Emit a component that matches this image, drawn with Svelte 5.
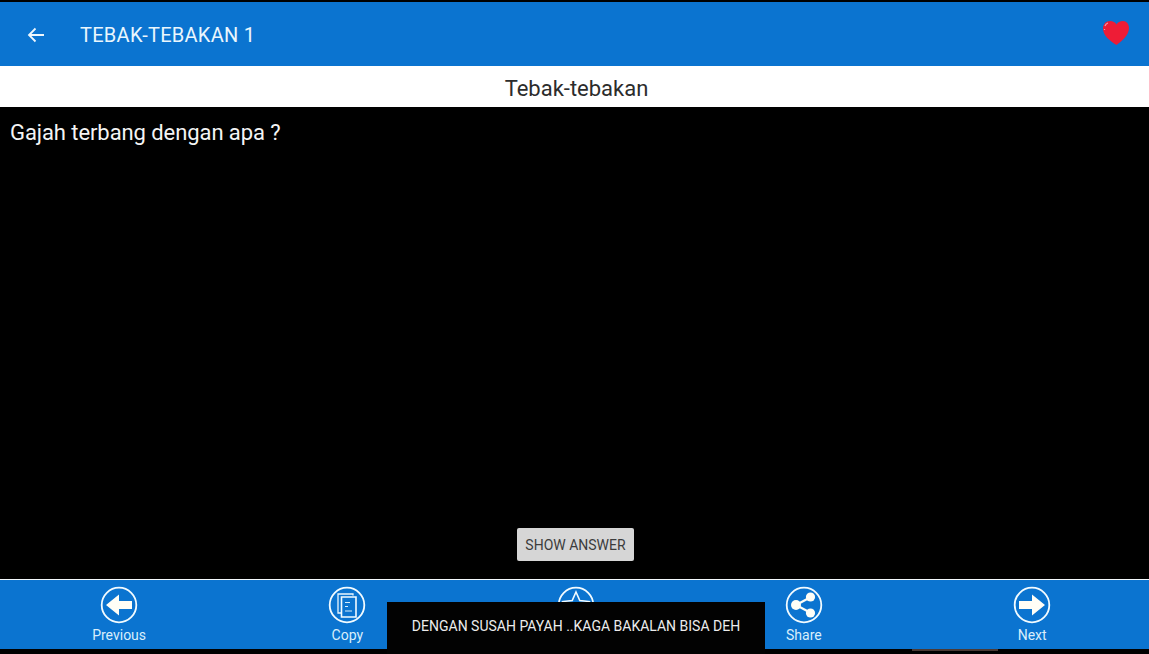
<script>
	const actions = [
		{ label: 'Previous', icon: 'prev' },
		{ label: 'Copy', icon: 'copy' },
		{ label: '', icon: 'star' },
		{ label: 'Share', icon: 'share' },
		{ label: 'Next', icon: 'next' }
	];
</script>

<div class="screen">
	<header class="appbar">
		<svg class="back" viewBox="0 0 18 16" width="18" height="16" aria-hidden="true">
			<path d="M17 8H2M8.5 1.5 2 8l6.500 6.500" fill="none" stroke="#eef7fd" stroke-width="1.800" />
		</svg>
		<h1>TEBAK-TEBAKAN 1</h1>
		<svg class="heart" viewBox="0 0 30 28" width="30" height="28" aria-hidden="true">
			<path d="M15.500 26C9 22 2 16.500 2 9.500 2 5 5 2 9 2c3 0 5.500 1.500 6.500 3.500C16.500 3.500 19 2 22 2c3.500 0 6 3 6 7 0 7-6.500 12.500-12.500 17Z" fill="#ee1c36" />
			<path d="M4 7c.5-1.500 1.500-2.500 3-3M3.500 10v1" fill="none" stroke="#f39aa8" stroke-width="1.200" />
		</svg>
	</header>

	<div class="subtitle">Tebak-tebakan</div>

	<main class="content">
		<p class="question">Gajah terbang dengan apa ?</p>
		<button class="show">SHOW ANSWER</button>
	</main>

	<nav class="bottom">
		{#each actions as a}
			<div class="action">
				<svg viewBox="0 0 38 38" width="38" height="38" aria-hidden="true">
					<circle cx="19" cy="19" r="17.300" fill="none" stroke="#f2fbff" stroke-width="1.800" />
					{#if a.icon === 'prev'}
						<path d="M6 19 19 8.500V15H32v8H19v6.500Z" fill="#fffef6" />
					{:else if a.icon === 'next'}
						<path d="M32 19 19 8.500V15H6v8h13v6.500Z" fill="#fffef6" />
					{:else if a.icon === 'copy'}
						<path d="M25 9.500V8H10v19h3" fill="none" stroke="#eaf6fd" stroke-width="1.300" />
						<path d="M13.500 11h14.500v20H13.500Z" fill="#0b74d0" stroke="#f2fbff" stroke-width="1.600" />
						<path d="M17 16.500h5M17 20.500h3M17 25h7" fill="none" stroke="#d8eefb" stroke-width="1" />
					{:else if a.icon === 'star'}
						<path d="M19 6l3.800 8.500 9.200 1-6.900 6.200 2 9L19 26l-8.100 4.700 2-9L6 15.500l9.200-1Z" fill="none" stroke="#f2fbff" stroke-width="1.600" />
					{:else}
						<path d="M25 11.500 11 19l14 7.500" fill="none" stroke="#fffef6" stroke-width="2.200" />
						<circle cx="25.500" cy="11" r="4.600" fill="#fffef6" />
						<circle cx="11" cy="19" r="5" fill="#fffef6" />
						<circle cx="25.500" cy="27" r="4.600" fill="#fffef6" />
					{/if}
				</svg>
				{#if a.label}
					<span>{a.label}</span>
				{/if}
			</div>
		{/each}
	</nav>

	<div class="edge"><i></i></div>

	<div class="toast">DENGAN SUSAH PAYAH ..KAGA BAKALAN BISA DEH</div>
</div>

<style>
	:global(body) {
		margin: 0;
		background: #000;
	}
	.screen {
		position: relative;
		width: 1149px;
		height: 654px;
		display: flex;
		flex-direction: column;
		overflow: hidden;
		background: #000;
		font-family: Roboto, "Liberation Sans", sans-serif;
	}
	.appbar {
		height: 64px;
		margin-top: 2px;
		flex: none;
		display: flex;
		align-items: center;
		padding: 2px 18px 0 27px;
		box-sizing: border-box;
		background: #0b74d0;
	}
	.back {
		margin-right: 35px;
	}
	.heart {
		margin-bottom: 4px;
	}
	h1 {
		flex: 1;
		margin: 0;
		font-size: 20px;
		font-weight: 400;
		letter-spacing: 0.28px;
		color: #eaf6fd;
	}
	.subtitle {
		height: 41px;
		flex: none;
		display: flex;
		align-items: center;
		justify-content: center;
		padding: 4px 0 0 4px;
		box-sizing: border-box;
		background: #fff;
		color: #2c2c2c;
		font-size: 22px;
	}
	.content {
		flex: 1;
		display: flex;
		flex-direction: column;
		justify-content: space-between;
		align-items: flex-start;
		padding: 13px 10px 18px;
		background: #000;
	}
	.question {
		margin: 0;
		color: #f4f4f4;
		font-size: 22px;
		line-height: 26px;
		letter-spacing: -0.08px;
	}
	.show {
		align-self: center;
		height: 33px;
		width: 117px;
		margin-left: 2px;
		padding: 0;
		border: 0;
		border-radius: 2px;
		background: #d6d6d6;
		color: #3c3c3c;
		font-family: inherit;
		font-size: 14px;
	}
	.bottom {
		height: 70px;
		box-sizing: border-box;
		flex: none;
		display: grid;
		grid-template-columns: repeat(5, 228.25px);
		padding-left: 5px;
		border-top: 1px solid #f4f9fc;
		background: #0b74d0;
	}
	.action {
		display: flex;
		flex-direction: column;
		align-items: center;
		padding-top: 6px;
	}
	.action svg {
		display: block;
	}
	.action span {
		margin-top: 1px;
		font-size: 14px;
		line-height: 20px;
		color: #d9eefb;
	}
	.edge {
		height: 5px;
		flex: none;
		padding-left: 912px;
	}
	.edge i {
		display: block;
		width: 86px;
		height: 2px;
		background: #4a3a35;
	}
	.toast {
		position: absolute;
		left: 387px;
		top: 602px;
		width: 378px;
		height: 52px;
		display: flex;
		align-items: center;
		justify-content: center;
		padding-bottom: 4px;
		box-sizing: border-box;
		background: #020202;
		color: #ececec;
		font-size: 14px;
	}
</style>
